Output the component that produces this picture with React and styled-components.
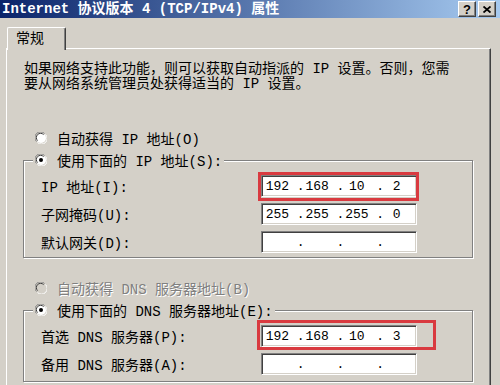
import React from 'react';
import styled, { createGlobalStyle } from 'styled-components';

const GlobalStyle = createGlobalStyle`
  html, body {
    margin: 0;
    padding: 0;
    background: #d4d0c8;
  }
`;

const Window = styled.div`
  width: 500px;
  height: 385px;
  overflow: hidden;
  display: flex;
  flex-direction: column;
  background: #d4d0c8;
  font-family: 'Liberation Mono', 'Noto Sans CJK SC', monospace;
  font-size: 14px;
  color: #000;
`;

const TitleBar = styled.div`
  flex: none;
  height: 18px;
  display: flex;
  align-items: center;
  padding: 0 4px 0 2px;
  background: linear-gradient(to right, #0a246a 0%, #a6caf0 100%);
`;

const Title = styled.div`
  flex: 1;
  color: #fff;
  font-weight: bold;
  white-space: pre;
  line-height: 18px;
`;

const CaptionButton = styled.div`
  width: 18px;
  height: 16px;
  box-sizing: border-box;
  margin-left: 2px;
  display: flex;
  align-items: center;
  justify-content: center;
  background: #d4d0c8;
  border: 1px solid;
  border-color: #fff #404040 #404040 #fff;
  box-shadow: inset -1px -1px 0 #808080;
  font-family: 'Liberation Sans', sans-serif;
  font-weight: bold;
  font-size: 13px;
  line-height: 1;
`;

const Body = styled.div`
  flex: 1;
  display: flex;
  flex-direction: column;
  padding: 9px 0 0 6px;
  min-height: 0;
`;

const Tabs = styled.div`
  display: flex;
  height: 21px;
  padding-left: 1px;
`;

const Tab = styled.div`
  position: relative;
  z-index: 1;
  width: 59px;
  height: 23px;
  box-sizing: border-box;
  padding: 4px 0 0 8px;
  background: #d4d0c8;
  border-top: 1px solid #fff;
  border-left: 1px solid #fff;
  border-right: 1px solid #404040;
  box-shadow: inset -1px 0 0 #808080;
  border-radius: 2px 2px 0 0;
  line-height: 15px;
`;

const Panel = styled.div`
  flex: 1;
  width: 485px;
  box-sizing: border-box;
  border-top: 1px solid #fff;
  border-left: 1px solid #fff;
  border-right: 1px solid #404040;
  box-shadow: inset -1px 0 0 #808080;
  padding: 13px 0 0 17px;
`;

const Intro = styled.p`
  margin: 0 0 35px;
  line-height: 15px;
  white-space: nowrap;
`;

const RadioRow = styled.div`
  display: flex;
  align-items: center;
  gap: 10px;
  height: 22px;
  padding-left: 11px;
  white-space: pre;
  color: ${p => (p.disabled ? '#808080' : '#000')};
  text-shadow: ${p => (p.disabled ? '1px 1px 0 #fff' : 'none')};
`;

const Group = styled.fieldset`
  width: 450px;
  box-sizing: border-box;
  margin: 0 0 ${p => p.gap || 0}px -1px;
  padding: 1px 0 ${p => p.bottom || 0}px 0;
  border: 1px solid #808080;
  box-shadow: inset 1px 1px 0 #fff, 1px 1px 0 #fff;
`;

const Legend = styled.legend`
  margin-left: 9px;
  padding: 0 2px;
  background: #d4d0c8;
  display: flex;
  align-items: center;
  gap: 10px;
  height: 22px;
  white-space: pre;
`;

const FieldRow = styled.div`
  display: grid;
  grid-template-columns: 220px 156px;
  align-items: center;
  height: 28px;
  padding-left: 17px;
  white-space: pre;
`;

const IpBox = styled.div`
  position: relative;
  width: 156px;
  height: 22px;
  box-sizing: border-box;
  display: flex;
  align-items: center;
  padding-left: 1px;
  background: #fff;
  border-top: 1px solid #808080;
  border-left: 1px solid #808080;
  border-bottom: 1px solid #fff;
  border-right: 1px solid #fff;
  box-shadow: inset 1px 1px 0 #404040, inset -1px -1px 0 #d4d0c8;
  font-family: 'Liberation Mono', monospace;
  font-size: 13px;
`;

const Octet = styled.span`
  width: 34px;
  box-sizing: border-box;
  padding-right: 5px;
  text-align: center;
`;

const Dot = styled.span`
  width: 6px;
  text-align: center;
`;

const Highlight = styled.div`
  position: absolute;
  top: ${p => p.t}px;
  left: ${p => p.l}px;
  right: ${p => p.r}px;
  bottom: ${p => p.b}px;
  border: 3px solid #d93a40;
  pointer-events: none;
`;

const Radio = ({ checked, disabled }) => (
  <svg width="12" height="12" viewBox="0 0 12 12">
    <circle cx="6" cy="6" r="5" fill={disabled ? '#d4d0c8' : '#fff'} />
    <path d="M1.5 9.5 A5 5 0 0 1 9.5 1.5" fill="none" stroke="#808080" strokeWidth="1" />
    <path d="M2.6 8.6 A3.8 3.8 0 0 1 8.6 2.6" fill="none" stroke="#404040" strokeWidth="1" />
    <path d="M10.5 2.5 A5.2 5.2 0 0 1 2.5 10.5" fill="none" stroke="#fff" strokeWidth="1" />
    {checked && <circle cx="6" cy="6" r="2" fill="#000" />}
  </svg>
);

const IpField = ({ value, highlight }) => {
  const parts = value ? value.split('.') : ['', '', '', ''];
  return (
    <IpBox>
      {parts.map((part, i) => (
        <React.Fragment key={i}>
          {i > 0 && <Dot>.</Dot>}
          <Octet>{part}</Octet>
        </React.Fragment>
      ))}
      {highlight && <Highlight {...highlight} />}
    </IpBox>
  );
};

const App = () => (
  <Window>
    <GlobalStyle />
    <TitleBar>
      <Title>Internet 协议版本 4 (TCP/IPv4) 属性</Title>
      <CaptionButton>?</CaptionButton>
      <CaptionButton>
        <svg width="8" height="7" viewBox="0 0 8 7">
          <path d="M0.5 0.5 L7.5 6.5 M7.5 0.5 L0.5 6.5" stroke="#000" strokeWidth="1.8" />
        </svg>
      </CaptionButton>
    </TitleBar>
    <Body>
      <Tabs>
        <Tab>常规</Tab>
      </Tabs>
      <Panel>
        <Intro>
          如果网络支持此功能，则可以获取自动指派的 IP 设置。否则，您需
          <br />
          要从网络系统管理员处获得适当的 IP 设置。
        </Intro>

        <RadioRow>
          <Radio />
          自动获得 IP 地址(O)
        </RadioRow>
        <Group gap={19} bottom={1}>
          <Legend>
            <Radio checked />
            使用下面的 IP 地址(S):
          </Legend>
          <FieldRow>
            <span>IP 地址(I):</span>
            <IpField value="192.168.10.2" highlight={{ t: -4, l: -4, r: -3, b: -5 }} />
          </FieldRow>
          <FieldRow>
            <span>子网掩码(U):</span>
            <IpField value="255.255.255.0" />
          </FieldRow>
          <FieldRow>
            <span>默认网关(D):</span>
            <IpField />
          </FieldRow>
        </Group>

        <RadioRow disabled>
          <Radio disabled />
          自动获得 DNS 服务器地址(B)
        </RadioRow>
        <Group bottom={3}>
          <Legend>
            <Radio checked />
            使用下面的 DNS 服务器地址(E):
          </Legend>
          <FieldRow>
            <span>首选 DNS 服务器(P):</span>
            <IpField value="192.168.10.3" highlight={{ t: -6, l: -5, r: -20, b: -4 }} />
          </FieldRow>
          <FieldRow>
            <span>备用 DNS 服务器(A):</span>
            <IpField />
          </FieldRow>
        </Group>
      </Panel>
    </Body>
  </Window>
);

export default App;
